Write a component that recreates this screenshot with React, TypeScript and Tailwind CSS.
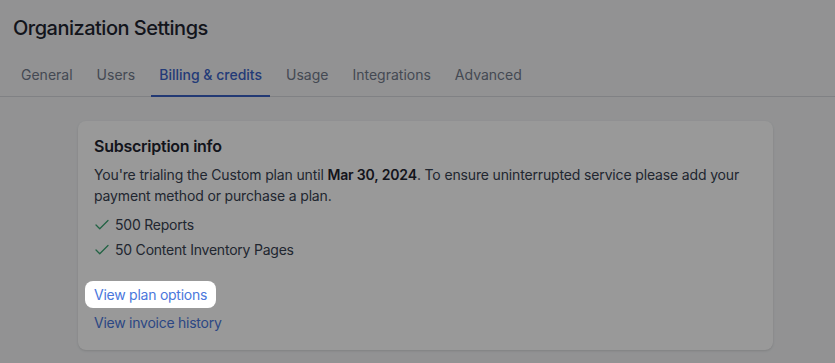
import React from 'react';
import { Check } from 'lucide-react';

const tabs = ['General', 'Users', 'Billing & credits', 'Usage', 'Integrations', 'Advanced'];

const App: React.FC = () => {
  return (
    <div
      className="relative w-full h-[363px] overflow-hidden bg-[#f3f4f6]"
      style={{ fontFamily: 'Inter, "Noto Sans", sans-serif' }}
    >
      {/* Header */}
      <div className="px-[13px] pt-[14px]">
        <h1 className="text-[20px] leading-[28px] font-medium tracking-[-0.5px] text-[#1f2430]">
          Organization Settings
        </h1>
      </div>

      {/* Tabs */}
      <nav className="mt-[23px] flex gap-2 px-[13px] border-b border-[#d6d8dd]">
        {tabs.map((t) => (
          <a
            key={t}
            className={
              'px-2 pb-[10px] -mb-px border-b-2 text-[14px] leading-5 ' +
              (t === 'Billing & credits'
                ? 'border-[#3a60c2] text-[#3b63c8] font-medium'
                : 'border-transparent text-[#727a8a]')
            }
          >
            {t}
          </a>
        ))}
      </nav>

      {/* Card */}
      <section className="mt-[24px] ml-[78px] w-[695px] rounded-lg bg-white shadow-sm px-4 pt-[13px] pb-[17px]">
        <h2 className="text-[16px] leading-6 font-semibold tracking-[-0.25px] text-[#1f2430]">Subscription info</h2>
        <p className="mt-[6px] text-[14px] leading-[21px] tracking-[-0.15px] text-[#374151]">
          You're trialing the Custom plan until <span className="font-semibold text-[#1f2430]">Mar 30, 2024</span>. To
          ensure uninterrupted service please add your payment method or purchase a plan.
        </p>
        <ul className="mt-[6px] text-[14px] leading-[25px] tracking-[-0.22px] text-[#374151]">
          <li className="flex items-center gap-1">
            <Check size={18} strokeWidth={1.75} className="text-[#3aa572] -ml-px" />
            500 Reports
          </li>
          <li className="flex items-center gap-1">
            <Check size={18} strokeWidth={1.75} className="text-[#3aa572] -ml-px" />
            50 Content Inventory Pages
          </li>
        </ul>
        <div className="mt-[19px] flex flex-col items-start text-[14px] tracking-[-0.25px] text-[#4a77dc]">
          <a className="relative z-20 -ml-[9px] rounded-lg bg-white px-[9px] py-1 leading-[19px]">
            View plan options
          </a>
          <a className="mt-[5px] leading-5">View invoice history</a>
        </div>
      </section>

      {/* Spotlight overlay */}
      <div className="absolute inset-0 z-10 bg-black/40" />
    </div>
  );
};

export default App;
